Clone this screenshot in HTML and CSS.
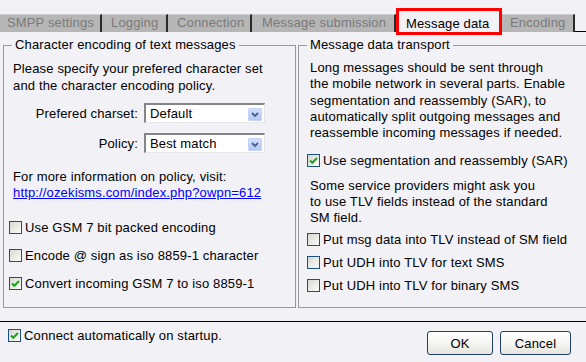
FILE: index.html
```html
<!DOCTYPE html>
<html lang="en">
<head>
    <meta charset="UTF-8">
    <meta name="viewport" content="width=device-width, initial-scale=1.0">
    <title>SMPP settings</title>
    <link rel="stylesheet" href="styles.css">
</head>
<body>
    <div class="tabs">
        <div class="tab tab-smpp">SMPP settings</div>
        <div class="tab tab-log">Logging</div>
        <div class="tab tab-conn">Connection</div>
        <div class="tab tab-sub">Message submission</div>
        <div class="tab active">Message data</div>
        <div class="tab tab-enc">Encoding</div>
        <div class="tab-rest"></div>
    </div>

    <div class="panels">
        <fieldset class="group group-left">
            <legend>Character encoding of text messages</legend>
            <p class="intro">Please specify your prefered character set<br>and the character encoding policy.</p>
            <div class="form">
                <label>Prefered charset:</label>
                <div class="combo">Default<span class="drop"><svg width="12" height="10" viewBox="0 0 12 10"><path d="M3 3 L6 6 L9 3" fill="none" stroke="#4a5f8a" stroke-width="1.8"/></svg></span></div>
                <label>Policy:</label>
                <div class="combo">Best match<span class="drop"><svg width="12" height="10" viewBox="0 0 12 10"><path d="M3 3 L6 6 L9 3" fill="none" stroke="#4a5f8a" stroke-width="1.8"/></svg></span></div>
            </div>
            <p class="info">For more information on policy, visit:<br><a href="#">http://ozekisms.com/index.php?owpn=612</a></p>
            <ul class="checks checks-left">
                <li><span class="box"></span>Use GSM 7 bit packed encoding</li>
                <li><span class="box"></span>Encode @ sign as iso 8859-1 character</li>
                <li><span class="box"><svg width="11" height="11" viewBox="0 0 11 11"><path d="M2 5.5 L4.3 7.8 L9 3" fill="none" stroke="#21a121" stroke-width="2"/></svg></span>Convert incoming GSM 7 to iso 8859-1</li>
            </ul>
        </fieldset>

        <fieldset class="group group-right">
            <legend>Message data transport</legend>
            <p class="intro">Long messages should be sent through<br>the mobile network in several parts. Enable<br>segmentation and reassembly (SAR), to<br>automatically split outgoing messages and<br>reassemble incoming messages if needed.</p>
            <div class="check sar"><span class="box"><svg width="11" height="11" viewBox="0 0 11 11"><path d="M2 5.5 L4.3 7.8 L9 3" fill="none" stroke="#21a121" stroke-width="2"/></svg></span>Use segmentation and reassembly (SAR)</div>
            <p class="note">Some service providers might ask you<br>to use TLV fields instead of the standard<br>SM field.</p>
            <ul class="checks checks-right">
                <li><span class="box"></span>Put msg data into TLV instead of SM field</li>
                <li><span class="box"></span>Put UDH into TLV for text SMS</li>
                <li><span class="box"></span>Put UDH into TLV for binary SMS</li>
            </ul>
        </fieldset>
    </div>

    <div class="footer">
        <div class="check auto"><span class="box"><svg width="11" height="11" viewBox="0 0 11 11"><path d="M2 5.5 L4.3 7.8 L9 3" fill="none" stroke="#21a121" stroke-width="2"/></svg></span>Connect automatically on startup.</div>
        <div class="buttons">
            <button class="btn btn-ok">OK</button>
            <button class="btn btn-cancel">Cancel</button>
        </div>
    </div>
</body>
</html>
```

FILE: styles.css
```css
*{margin:0; padding:0; box-sizing:border-box;}
li{list-style:none;}

html, body{overflow:hidden;}
body{
    width:586px;
    height:362px;
    background:#f1f1f6;
    font-family:"Liberation Sans", Arial, sans-serif;
    font-size:13px;
    letter-spacing:.15px;
    color:#000;
}

/* tab strip */
.tabs{
    display:flex;
    align-items:flex-start;
    margin-top:14px;
    height:18px;
}
.tab{
    height:18px;
    padding-left:8px;
    background:#b6b6b6;
    border-top:1px solid #cdcdcd;
    border-right:2px solid #2b2b2b;
    color:#7a7a7a;
    line-height:16px;
    white-space:nowrap;
}
.tab-smpp{width:102px; padding-left:7px;}
.tab-log{width:66px; padding-left:9px;}
.tab-conn{width:84px; padding-left:9px;}
.tab-sub{width:144px; padding-left:10px;}
.tab-enc{width:73px;}
.tab.active{
    width:106px;
    height:27px;
    margin-top:-6px;
    padding:2px 0 0 7px;
    border:3px solid #f00;
    background:#f1f1f6;
    color:#000;
    line-height:21px;
}
.tab-rest{
    flex:1;
    height:18px;
    border-bottom:1px solid #000;
}

/* group boxes - the right one runs past the window edge */
.panels{
    display:flex;
    gap:2px;
    margin:5px 0 0 3px;
}
.group{
    min-width:0;
    height:271px;
    border:1px solid #999;
    padding:0 0 0 9px;
}
.group legend{
    margin-left:-1px;
    padding:0 3px;
    line-height:16px;
}
.group-left{flex:0 0 293px;}
.group-right{flex:1; padding-left:11px; border-right:none;}
.group-right legend{margin-left:-3px;}

.intro{margin-top:7px; line-height:17px;}
.group-right .intro{line-height:16.3px;}

.form{
    display:grid;
    grid-template-columns:125px 121px;
    grid-auto-rows:20px;
    column-gap:6px;
    row-gap:10px;
    margin-top:9px;
}
.form label{
    align-self:center;
    text-align:right;
}
.combo{
    position:relative;
    background:#fff;
    border-top:2px solid #858585;
    border-left:2px solid #858585;
    border-bottom:1px solid #e6e6e6;
    border-right:1px solid #e6e6e6;
    padding-left:4px;
    line-height:18px;
}
.drop{
    position:absolute;
    right:2px;
    top:3px;
    width:14px;
    height:13px;
    display:flex;
    align-items:center;
    justify-content:center;
    background:linear-gradient(#d2defc, #b4c8f4);
    border:1px solid #c3d3f7;
    border-radius:1px;
}

.info{margin-top:16px; line-height:16px;}
.info a{color:#00f;}

/* checkboxes */
.box{
    flex:0 0 13px;
    width:13px;
    height:13px;
    margin-right:3px;
    border:1px solid #1c5180;
    background:linear-gradient(135deg, #d8d8d2, #fbfbf9);
    display:flex;
    align-items:center;
    justify-content:center;
}
.checks li, .check{
    display:flex;
    align-items:center;
    white-space:nowrap;
}
.checks-left{margin-top:12px;}
.checks-left li{height:28px; margin-left:-4px;}
.checks-right{margin-top:2px;}
.checks-right li{height:23px; margin-left:-3px;}

.sar{height:20px; margin:9px 0 0 -3px;}
.note{margin-top:8px; line-height:16px;}

/* bottom bar */
.footer{
    display:flex;
    justify-content:space-between;
    align-items:flex-start;
    margin-top:13px;
    border-top:1px solid #000;
    padding:7px 15px 0 8px;
}
.auto{height:13px; line-height:13px;}
.buttons{
    display:flex;
    gap:7px;
    margin-top:2px;
}
.btn{
    height:24px;
    border:1px solid #1e3f66;
    border-radius:3px;
    background:linear-gradient(#ffffff, #f3f3ef 60%, #e4e3dc);
    font-family:inherit;
    font-size:13px;
    letter-spacing:.15px;
    color:#000;
}
.btn-ok{width:66px;}
.btn-cancel{width:71px;}
```
